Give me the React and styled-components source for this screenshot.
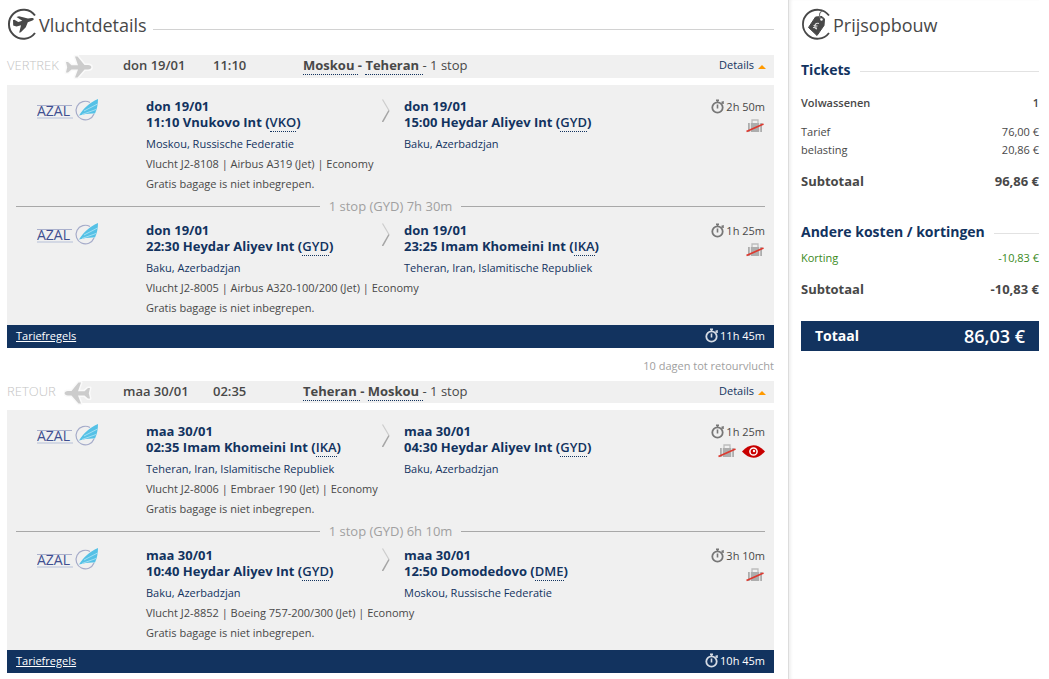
import styled, { createGlobalStyle, css } from 'styled-components';

const navy = '#12335f';
const grey = '#f0f0f0';

const GlobalStyle = createGlobalStyle`
  * {
    box-sizing: border-box;
  }
  body {
    margin: 0;
    background: #fff;
    color: #484848;
    font-family: "Open Sans", "Noto Sans", sans-serif;
    font-size: 11px;
    line-height: 20px;
  }
  a {
    color: inherit;
  }
`;

const Page = styled.div`
  display: flex;
  min-height: 100vh;
  padding-right: 10px;
`;

const Main = styled.main`
  flex: 1;
  min-width: 0;
  padding: 8px 14px 6px 7px;
`;

const Sidebar = styled.aside`
  flex: none;
  width: 251px;
  padding: 8px 0 0 12px;
  border-left: 1px solid #dcdcdc;
  box-shadow: inset 3px 0 3px -1px #f0f0f0;
`;

const Heading = styled.h1`
  display: flex;
  align-items: center;
  height: 34px;
  margin: 0;
  font-size: 18px;
  font-weight: 400;
  line-height: 34px;
  white-space: nowrap;
  ${props =>
    props.$ruled &&
    css`
      &::after {
        content: '';
        flex: 1;
        height: 1px;
        margin: 8px 0 0 6px;
        background: #d2d2d2;
      }
    `}
`;

const Bar = styled.div`
  display: flex;
  align-items: flex-start;
  height: ${props => (props.$back ? '22px' : '23px')};
  margin: ${props => (props.$back ? '5px' : '13px')} 0 7px;
  font-size: 13px;
  background: linear-gradient(to right, #fff 72px, ${grey} 72px);
`;

const Direction = styled.span`
  display: flex;
  justify-content: space-between;
  width: 87px;
  margin-right: 29px;
  color: #c4c4c4;
  font-weight: 300;
`;

const When = styled.span`
  width: 90px;
  font-weight: 600;
`;

const Route = styled.span`
  flex: 1;
`;

const City = styled.b`
  font-weight: 700;
  border-bottom: 1px dotted ${navy};
  white-space: pre;
`;

const Dash = styled.b`
  font-weight: 700;
`;

const Toggle = styled.button`
  display: flex;
  align-items: center;
  gap: 4px;
  margin-right: 8px;
  padding: 0;
  border: 0;
  background: none;
  color: ${navy};
  font: inherit;
  font-size: 11px;
  cursor: pointer;
  &::after {
    content: '';
    margin-top: 4px;
    border: 4px solid transparent;
    border-top: 0;
    border-bottom-color: #f90;
  }
`;

const Card = styled.section`
  padding: 13px 9px 7px;
  background: ${grey};
`;

const Segment = styled.article`
  display: grid;
  grid-template-columns: 130px 236px 22px 1fr auto;
  grid-template-rows: 56px 40px;
`;

const Airline = styled.div`
  padding-left: 21px;
`;

const Stop = styled.div`
  color: ${navy};
`;

const Place = styled.h2`
  margin: 0 0 4px;
  font-size: 13px;
  font-weight: 700;
  line-height: 16px;
  white-space: nowrap;
`;

const Code = styled.abbr`
  border-bottom: 1px dotted ${navy};
  font-weight: 600;
  text-decoration: none;
`;

const Info = styled.p`
  grid-column: 2 / 5;
  margin: 0;
  white-space: pre-line;
`;

const Meta = styled.div`
  text-align: right;
`;

const Duration = styled.div`
  display: flex;
  align-items: center;
  justify-content: flex-end;
  gap: 2px;
  height: 18px;
`;

const Badges = styled.div`
  display: flex;
  align-items: center;
  justify-content: flex-end;
  gap: 5px;
  height: 20px;
`;

const Layover = styled.div`
  display: flex;
  align-items: center;
  gap: 9px;
  height: 24px;
  margin-bottom: 4px;
  color: #a0a0a0;
  font-size: 13px;
  &::before,
  &::after {
    content: '';
    flex: 1;
    height: 1px;
    background: #a8a8a8;
  }
`;

const Footer = styled.footer`
  display: flex;
  align-items: center;
  justify-content: space-between;
  height: 23px;
  padding: 0 9px 2px;
  background: ${navy};
  color: #fff;
`;

const Gap = styled.p`
  height: 20px;
  margin: 8px 0 0;
  color: #a0a0a0;
  text-align: right;
`;

const GroupTitle = styled.h2`
  display: flex;
  align-items: center;
  gap: 9px;
  margin: ${props => (props.$first ? '18px' : '32px')} 0 0;
  color: ${navy};
  font-size: 14px;
  font-weight: 700;
  line-height: 20px;
  white-space: nowrap;
  &::after {
    content: '';
    flex: 1;
    height: 1px;
    margin-top: 3px;
    background: #e2e2e2;
  }
`;

const Prices = styled.table`
  width: 100%;
  border-collapse: collapse;
  line-height: 18px;
`;

const kinds = {
  head: css`
    font-weight: 600;
    th, td { padding: 14px 0 11px; }
  `,
  item: css`
    font-weight: 400;
  `,
  discount: css`
    color: #3a8a1c;
    th, td { padding-top: 7px; }
  `,
  sum: css`
    font-size: 13px;
    font-weight: 700;
    th, td { padding-top: 13px; }
  `
};

const PriceRow = styled.tr`
  th, td {
    padding: 0;
    font-weight: inherit;
    text-align: left;
  }
  td {
    text-align: right;
  }
  ${props => kinds[props.$kind]}
`;

const Total = styled.div`
  display: flex;
  align-items: center;
  justify-content: space-between;
  height: 30px;
  margin-top: 23px;
  padding: 0 14px;
  background: ${navy};
  color: #fff;
  font-size: 14px;
  font-weight: 700;
`;

const Amount = styled.strong`
  font-size: 18px;
  font-weight: 600;
`;

const FlightIcon = () => (
  <svg width="32" height="34" viewBox="0 0 32 34">
    <path d="M28 7.500A14.500 14.500 0 1 0 28 25" fill="none" stroke="#484848" strokeWidth="2" />
    <path
      d="M6 12l1.500-.3 3.800 2.300 4-1.200L9.500 9l2.500-.8 9 2.300 3.500-.6c1.600-.1 2.600.5 2.300 1.400-.4 1-2 1.700-4 2.200l-2 .7-2 5-5 5-1.600.6 1.800-7.600-4.500 1.200-3.300-1z"
      fill="#484848"
    />
  </svg>
);

const TagIcon = () => (
  <svg width="32" height="34" viewBox="0 0 32 34">
    <path d="M28 7.500A14.500 14.500 0 1 0 28 25" fill="none" stroke="#484848" strokeWidth="1.800" />
    <path d="M7.500 19.500l7-10.500 6.500-.5 2.500 2.500-.5 6.500-7 10z" fill="#484848" stroke="#484848" strokeLinejoin="round" />
    <path d="M20 11.500c-3-4-1.500-8 2-8.500" fill="none" stroke="#777" strokeWidth="1.200" />
    <circle cx="20.500" cy="11.500" r="1.200" fill="#fff" />
    <path d="M18 15.500c-4-1.500-6 4.500-2 5.500M12.500 17.500l4 .5M12 19.500l4 .5" fill="none" stroke="#ddd" strokeWidth="1.200" />
  </svg>
);

const Plane = ({ back }) => (
  <svg width="30" height="24" viewBox="0 0 30 24">
    <g transform={back ? 'matrix(-1 0 0 1 28 0)' : undefined}>
      <path
        d="M2 7h2l3.500 3.200h6.500L11 1.500h2.500l7 8.500h3.500c4.500 0 4.500 4.500 0 4.500h-3.500l-7 8H11l3-8H7.500L4 17.500H2l1.200-5.200z"
        fill="#ccc"
        stroke="#fafafa"
        strokeWidth="3"
        paintOrder="stroke"
        strokeLinejoin="round"
      />
    </g>
  </svg>
);

const Azal = () => (
  <svg width="62" height="25" viewBox="0 0 62 25" role="img" aria-label="AZAL">
    <path d="M0 7.500h35" stroke="#aab0cc" />
    <path d="M0 20h36" stroke="#d3d8e4" strokeWidth="2" />
    <text x="0" y="18" fontFamily="Open Sans" fontSize="14" fill="#3f4f91">AZAL</text>
    <path d="M53 4.500A9.300 9.300 0 1 0 57 16" fill="none" stroke="#a5abc9" strokeWidth="1.200" />
    <path d="M42 17.500C47 10 52 5 61 1q0 8-3 14.500Q50 15 42 17.500z" fill="#55c1e6" />
    <path d="M47 13L60.500 6M45 16.500L59 11.500" stroke="#b5e6f6" strokeWidth=".8" />
  </svg>
);

const Chevron = () => (
  <svg width="9" height="24" viewBox="0 0 9 24">
    <path d="M.5 1.500L7 12.500" fill="none" stroke="#ccc" strokeWidth="1.200" />
    <path d="M7 12.500L.5 24" fill="none" stroke="#a5a5a5" strokeWidth="1.500" />
  </svg>
);

const Stopwatch = ({ color = '#777' }) => (
  <svg width="13" height="16" viewBox="0 0 13 16" fill="none" stroke={color}>
    <circle cx="6.500" cy="8.500" r="5.200" strokeWidth="1.800" />
    <path d="M5 1.200h3M6.500 1v2.500M6.500 5.500v4M10.500 3.500l1.500-.5v2" strokeWidth="1.600" />
  </svg>
);

const NoBaggage = () => (
  <svg width="19" height="14" viewBox="0 0 19 14" role="img" aria-label="Geen bagage">
    <path d="M2 4h1.800v9H2zM4.800 4h8.400v9H4.800zM14.200 4H16v9h-1.800z" fill="#adadad" />
    <path d="M6 4V1h6v3" fill="none" stroke="#bdbdbd" strokeWidth="1.300" />
    <path d="M.5 12.500L17.500 5" stroke="#dc3a30" strokeWidth="1.800" />
  </svg>
);

const Eye = () => (
  <svg width="23" height="13" viewBox="0 0 23 13" role="img" aria-label="Let op">
    <path d="M0 6.500Q11.500-6 23 6.500 11.500 19 0 6.500z" fill="#c80000" />
    <circle cx="11.500" cy="6.500" r="3.600" fill="none" stroke="#fff" strokeWidth="1.500" />
    <circle cx="12" cy="6" r="1.200" fill="#fff" />
  </svg>
);

const trips = [
  {
    label: 'VERTREK',
    date: 'don 19/01',
    time: '11:10',
    from: 'Moskou',
    to: 'Teheran',
    layover: '1 stop (GYD) 7h 30m',
    total: '11h 45m',
    segments: [
      {
        dep: { time: '11:10', airport: 'Vnukovo Int', code: 'VKO', city: 'Moskou, Russische Federatie' },
        arr: { time: '15:00', airport: 'Heydar Aliyev Int', code: 'GYD', city: 'Baku, Azerbadzjan' },
        flight: 'Vlucht J2-8108 | Airbus A319 (Jet) | Economy',
        duration: '2h 50m'
      },
      {
        dep: { time: '22:30', airport: 'Heydar Aliyev Int', code: 'GYD', city: 'Baku, Azerbadzjan' },
        arr: { time: '23:25', airport: 'Imam Khomeini Int', code: 'IKA', city: 'Teheran, Iran, Islamitische Republiek' },
        flight: 'Vlucht J2-8005 | Airbus A320-100/200 (Jet) | Economy',
        duration: '1h 25m'
      }
    ]
  },
  {
    label: 'RETOUR',
    back: true,
    date: 'maa 30/01',
    time: '02:35',
    from: 'Teheran',
    to: 'Moskou',
    layover: '1 stop (GYD) 6h 10m',
    total: '10h 45m',
    segments: [
      {
        dep: { time: '02:35', airport: 'Imam Khomeini Int', code: 'IKA', city: 'Teheran, Iran, Islamitische Republiek' },
        arr: { time: '04:30', airport: 'Heydar Aliyev Int', code: 'GYD', city: 'Baku, Azerbadzjan' },
        flight: 'Vlucht J2-8006 | Embraer 190 (Jet) | Economy',
        duration: '1h 25m',
        night: true
      },
      {
        dep: { time: '10:40', airport: 'Heydar Aliyev Int', code: 'GYD', city: 'Baku, Azerbadzjan' },
        arr: { time: '12:50', airport: 'Domodedovo', code: 'DME', city: 'Moskou, Russische Federatie' },
        flight: 'Vlucht J2-8852 | Boeing 757-200/300 (Jet) | Economy',
        duration: '3h 10m'
      }
    ]
  }
];

const Point = ({ date, point }) => (
  <Stop>
    <Place>
      {date}<br />
      {point.time} {point.airport} (<Code>{point.code}</Code>)
    </Place>
    {point.city}
  </Stop>
);

const Flight = ({ date, segment }) => (
  <Segment>
    <Airline><Azal /></Airline>
    <Point date={date} point={segment.dep} />
    <Chevron />
    <Point date={date} point={segment.arr} />
    <Meta>
      <Duration><Stopwatch />{segment.duration}</Duration>
      <Badges>
        <NoBaggage />
        {segment.night && <Eye />}
      </Badges>
    </Meta>
    <Info>{segment.flight}{'\n'}Gratis bagage is niet inbegrepen.</Info>
  </Segment>
);

const Trip = ({ trip }) => (
  <>
    <Bar $back={trip.back}>
      <Direction>{trip.label}<Plane back={trip.back} /></Direction>
      <When>{trip.date}</When>
      <When>{trip.time}</When>
      <Route>
        <City>{trip.from} </City><Dash>- </Dash><City>{trip.to} </City>- 1 stop
      </Route>
      <Toggle type="button">Details</Toggle>
    </Bar>
    <Card>
      <Flight date={trip.date} segment={trip.segments[0]} />
      <Layover>{trip.layover}</Layover>
      <Flight date={trip.date} segment={trip.segments[1]} />
    </Card>
    <Footer>
      <a href="#tariefregels">Tariefregels</a>
      <Duration><Stopwatch color="#d5dbe4" />{trip.total}</Duration>
    </Footer>
  </>
);

const Price = ({ kind, label, value }) => (
  <PriceRow $kind={kind}>
    <th scope="row">{label}</th>
    <td>{value}</td>
  </PriceRow>
);

function App() {
  return (
    <Page>
      <GlobalStyle />
      <Main>
        <Heading $ruled><FlightIcon />Vluchtdetails</Heading>
        <Trip trip={trips[0]} />
        <Gap>10 dagen tot retourvlucht</Gap>
        <Trip trip={trips[1]} />
      </Main>
      <Sidebar>
        <Heading><TagIcon />Prijsopbouw</Heading>
        <GroupTitle $first>Tickets</GroupTitle>
        <Prices>
          <tbody>
            <Price kind="head" label="Volwassenen" value="1" />
            <Price kind="item" label="Tarief" value="76,00 €" />
            <Price kind="item" label="belasting" value="20,86 €" />
            <Price kind="sum" label="Subtotaal" value="96,86 €" />
          </tbody>
        </Prices>
        <GroupTitle>Andere kosten / kortingen</GroupTitle>
        <Prices>
          <tbody>
            <Price kind="discount" label="Korting" value="-10,83 €" />
            <Price kind="sum" label="Subtotaal" value="-10,83 €" />
          </tbody>
        </Prices>
        <Total>Totaal<Amount>86,03 €</Amount></Total>
      </Sidebar>
    </Page>
  );
}

export default App;
